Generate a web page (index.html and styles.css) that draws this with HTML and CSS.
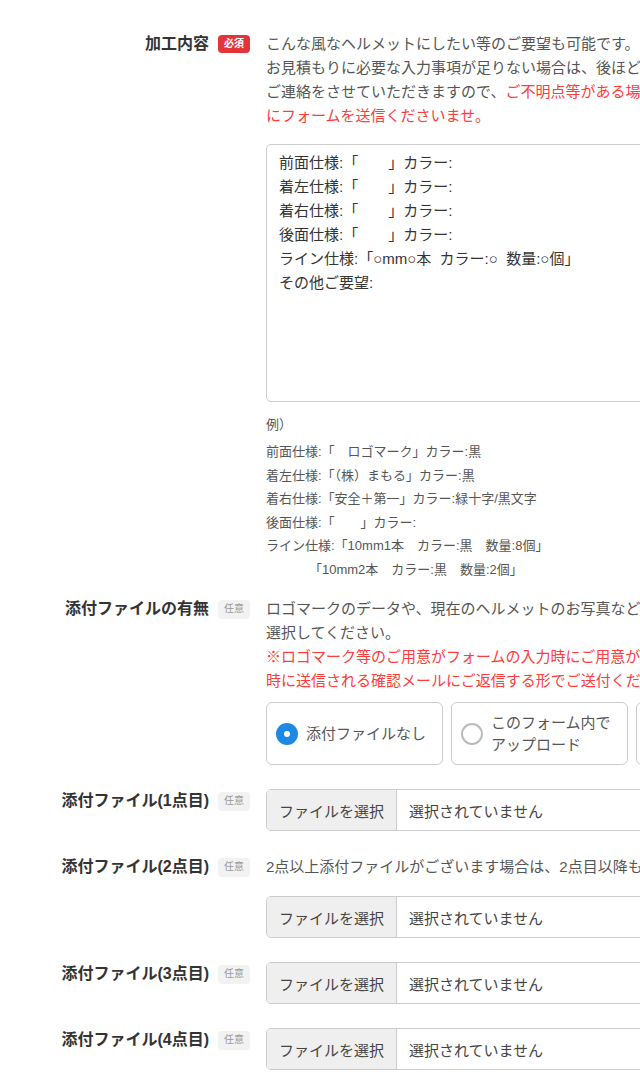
FILE: index.html
```html
<!DOCTYPE html>
<html lang="ja">
<head>
<meta charset="utf-8">
<title>お見積もりフォーム</title>
<link rel="stylesheet" href="styles.css">
</head>
<body>
<div class="page">
  <div class="form">
    <div class="row row-first">
      <div class="label"><span class="label-text">加工内容</span><span class="badge badge-req">必須</span></div>
      <div class="field">
        <p class="desc">こんな風なヘルメットにしたい等のご要望も可能です。<br>お見積もりに必要な入力事項が足りない場合は、後ほど担当者より<br>ご連絡をさせていただきますので、<span class="red">ご不明点等がある場合もお気軽<br>にフォームを送信くださいませ。</span></p>
        <textarea class="textarea">前面仕様:「　　」カラー:
着左仕様:「　　」カラー:
着右仕様:「　　」カラー:
後面仕様:「　　」カラー:
ライン仕様:「○mm○本  カラー:○  数量:○個」
その他ご要望:</textarea>
        <div class="example">
          <p class="example-head">例）</p>
          <div class="example-body">
            <p class="example-line">前面仕様:「　ロゴマーク」カラー:黒</p>
            <p class="example-line">着左仕様:「（株）まもる」カラー:黒</p>
            <p class="example-line">着右仕様:「安全＋第一」カラー:緑十字/黒文字</p>
            <p class="example-line">後面仕様:「　　」カラー:</p>
            <p class="example-line">ライン仕様:「10mm1本　カラー:黒　数量:8個」</p>
            <p class="example-line example-indent">「10mm2本　カラー:黒　数量:2個」</p>
          </div>
        </div>
      </div>
    </div>

    <div class="row">
      <div class="label"><span class="label-text">添付ファイルの有無</span><span class="badge badge-opt">任意</span></div>
      <div class="field">
        <p class="desc">ロゴマークのデータや、現在のヘルメットのお写真などがございましたら<br>選択してください。<br><span class="red">※ロゴマーク等のご用意がフォームの入力時にご用意が難しい場合は、送信<br>時に送信される確認メールにご返信する形でご送付ください。</span></p>
        <div class="options">
          <label class="opt"><span class="radio radio-on"></span><span class="opt-text">添付ファイルなし</span></label>
          <label class="opt"><span class="radio"></span><span class="opt-text">このフォーム内で<br>アップロード</span></label>
          <label class="opt"><span class="radio"></span><span class="opt-text">メールで<br>送付する</span></label>
        </div>
      </div>
    </div>

    <div class="row">
      <div class="label"><span class="label-text">添付ファイル(1点目)</span><span class="badge badge-opt">任意</span></div>
      <div class="field">
        <div class="file"><span class="file-btn">ファイルを選択</span><span class="file-name">選択されていません</span></div>
      </div>
    </div>

    <div class="row">
      <div class="label"><span class="label-text">添付ファイル(2点目)</span><span class="badge badge-opt">任意</span></div>
      <div class="field">
        <p class="desc">2点以上添付ファイルがございます場合は、2点目以降もご選択ください。</p>
        <div class="file file-spaced"><span class="file-btn">ファイルを選択</span><span class="file-name">選択されていません</span></div>
      </div>
    </div>

    <div class="row">
      <div class="label"><span class="label-text">添付ファイル(3点目)</span><span class="badge badge-opt">任意</span></div>
      <div class="field">
        <div class="file"><span class="file-btn">ファイルを選択</span><span class="file-name">選択されていません</span></div>
      </div>
    </div>

    <div class="row">
      <div class="label"><span class="label-text">添付ファイル(4点目)</span><span class="badge badge-opt">任意</span></div>
      <div class="field">
        <div class="file"><span class="file-btn">ファイルを選択</span><span class="file-name">選択されていません</span></div>
      </div>
    </div>
  </div>
</div>
</body>
</html>
```

FILE: styles.css
```css
html, body {
  margin: 0;
  padding: 0;
  background: #fff;
  overflow: hidden;
}

body {
  font-family: "Liberation Sans", "Noto Sans CJK JP", sans-serif;
  color: #555;
}

.page {
  width: 900px;
  padding-top: 32px;
}

.form {
  display: flex;
  flex-direction: column;
  gap: 24px;
}

.row {
  display: grid;
  grid-template-columns: 250px 580px;
  column-gap: 16px;
  align-items: start;
}

.row-first {
  margin-bottom: -8px;
}

.label {
  display: flex;
  justify-content: flex-end;
  align-items: center;
  gap: 9px;
  height: 24px;
}

.label-text {
  font-size: 16px;
  font-weight: bold;
  color: #333;
  line-height: 24px;
  white-space: nowrap;
}

.badge {
  display: inline-flex;
  align-items: center;
  justify-content: center;
  height: 18px;
  padding: 0 6px;
  border-radius: 4px;
  font-size: 10px;
  line-height: 1;
}

.badge-req {
  background: #e3343a;
  color: #fff;
  font-weight: bold;
}

.badge-opt {
  background: #f2f2f2;
  color: #999;
  height: 19px;
}

.field {
  min-width: 0;
}

.desc {
  margin: 0;
  font-size: 15px;
  line-height: 24px;
  color: #555;
  white-space: nowrap;
}

.red {
  color: #ff3b3b;
}

.textarea {
  display: block;
  box-sizing: border-box;
  width: 100%;
  height: 258px;
  margin: 16px 0 0;
  padding: 6px 12px;
  border: 1px solid #ccc;
  border-radius: 5px;
  font-family: "Liberation Sans", "Noto Sans CJK JP", sans-serif;
  font-size: 15px;
  line-height: 24px;
  color: #333;
  resize: none;
  overflow: hidden;
  background: #fff;
}

.example {
  margin-top: 11px;
  font-size: 13px;
  color: #555;
}

.example-head {
  margin: 0 0 3px;
  line-height: 24px;
}

.example-body {
  white-space: nowrap;
}

.example-line {
  margin: 0;
  line-height: 23.5px;
}

.example-indent {
  padding-left: 43px;
}

.options {
  display: flex;
  gap: 8px;
  margin-top: 9px;
}

.opt {
  box-sizing: border-box;
  flex: 0 0 177px;
  height: 63px;
  display: flex;
  align-items: center;
  gap: 8px;
  padding: 0 9px;
  border: 1px solid #ccc;
  border-radius: 6px;
  background: #fff;
  font-size: 15px;
  line-height: 22px;
  color: #555;
}

.radio {
  box-sizing: border-box;
  flex: 0 0 22px;
  width: 22px;
  height: 22px;
  border-radius: 50%;
  border: 2px solid #bbb;
  background: #fff;
  position: relative;
}

.radio-on {
  border: none;
  background: #1e88e5;
}

.radio-on::after {
  content: "";
  position: absolute;
  left: 8px;
  top: 8px;
  width: 6px;
  height: 6px;
  border-radius: 50%;
  background: #fff;
}

.file {
  box-sizing: border-box;
  display: flex;
  align-items: stretch;
  width: 100%;
  height: 42px;
  border: 1px solid #ccc;
  border-radius: 5px;
  overflow: hidden;
  font-size: 15px;
  color: #444;
}

.file-spaced {
  margin-top: 17px;
}

.file-btn {
  display: flex;
  align-items: center;
  padding: 0 12px;
  background: #efefef;
  border-right: 1px solid #ccc;
  white-space: nowrap;
}

.file-name {
  display: flex;
  align-items: center;
  padding: 0 12px;
  white-space: nowrap;
}
```
